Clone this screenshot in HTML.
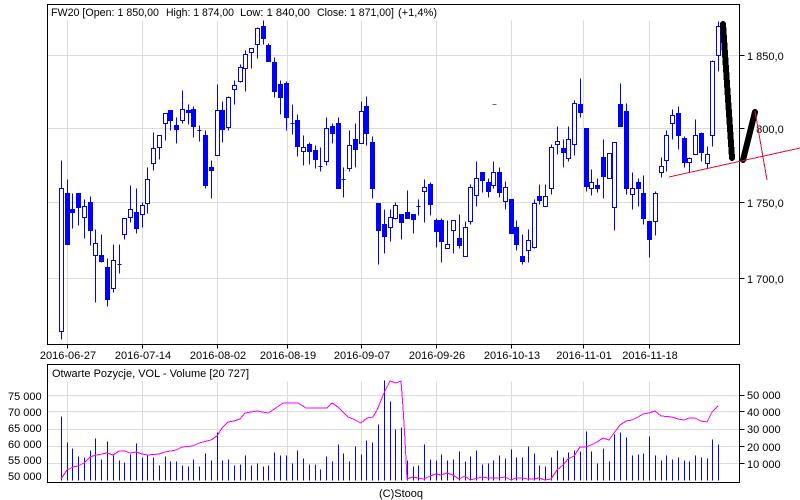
<!DOCTYPE html>
<html><head><meta charset="utf-8"><style>
html,body{margin:0;padding:0;background:#fff;width:800px;height:500px;overflow:hidden}
svg{display:block}
text{font-family:"Liberation Sans",Arial,sans-serif;font-size:11px;fill:#000;white-space:pre}
</style></head><body>
<svg width="800" height="500" viewBox="0 0 800 500" xmlns="http://www.w3.org/2000/svg">
<rect width="800" height="500" fill="#fff"/>
<g transform="translate(.5,.5)" shape-rendering="crispEdges">
<path fill="none" stroke="#dcdcdc" d="M67 20V344M142 20V344M217 20V344M287 20V344M361 20V344M436 20V344M511 20V344M583 20V344M649 20V344M47 55H739M47 128H739M47 202H739M47 278H739M67 381V482M142 381V482M217 381V482M287 381V482M361 381V482M436 381V482M511 381V482M583 381V482M649 381V482M47 395H739M47 411H739M47 429H739M47 446H739M47 463H739"/>
<path fill="none" stroke="#000" d="M47 4H739V344H47ZM47 364H739V482H47ZM739 55H744M739 128H744M739 202H744M739 278H744M739 395H744M739 411H744M739 429H744M739 446H744M739 463H744M67 344V348M142 344V348M217 344V348M287 344V348M361 344V348M436 344V348M511 344V348M583 344V348M649 344V348"/>
<!-- wicks -->
<path fill="none" stroke="#00f" d="M61 160V339M67 179V244M72 193V228M78 193V225M84 199V238M90 196V245M95 229V302M101 234V262M107 258V306M113 244V292M119 244V273M124 218V239M130 185V222M136 188V233M142 202V227M147 167V213M153 132V170M159 135V159M165 113V140M170 110V130M176 117V143M182 90V123M188 104V124M193 106V137M199 125V141M205 130V188M211 160V198M217 84V155M222 101V142M228 96V130M234 80V104M240 64V82M245 50V91M251 48V68M257 27V58M263 20V44M268 43V61M274 57V97M280 80V114M286 81V130M292 104V134M297 114V156M303 135V165M309 142V164M315 145V168M320 147V171M326 117V165M332 123V143M338 117V188M343 167V197M349 130V171M355 123V167M361 101V143M366 96V145M372 136V198M378 203V264M384 209V253M390 209V241M395 202V219M401 214V239M407 190V218M413 214V233M418 199V215M424 179V222M430 182V215M436 218V247M441 218V262M447 220V248M453 220V253M459 214V248M465 221V256M470 184V224M476 161V206M482 172V192M488 178V197M493 161V188M499 167V197M505 181V209M511 199V233M516 220V250M522 234V264M528 229V262M534 199V248M539 184V204M545 184V206M551 144V194M557 126V154M563 139V167M568 126V161M574 100V155M580 78V117M586 128V191M591 169V195M597 178V192M603 139V198M609 153V178M614 142V230M620 83V126M626 103V194M632 172V209M638 178V206M643 175V224M649 221V257M655 191V235M661 157V177M666 130V171M672 109V139M678 106V149M684 136V167M689 157V172M695 119V154M701 132V161M707 146V168M712 60V146M718 21V71"/>
<!-- filled -->
<path fill="#00f" stroke="#00f" d="M65 193h4v51h-4zM70 209h4v3h-4zM76 193h4v14h-4zM88 202h4v28h-4zM99 255h4v6h-4zM105 267h4v32h-4zM117 264h4v0h-4zM134 212h4v16h-4zM168 110h4v10h-4zM174 125h4v4h-4zM186 110h4v2h-4zM191 109h4v17h-4zM197 130h4v0h-4zM203 135h4v50h-4zM209 167h4v3h-4zM220 110h4v19h-4zM261 26h4v12h-4zM266 45h4v16h-4zM272 62h4v29h-4zM278 84h4v13h-4zM284 83h4v34h-4zM290 123h4v0h-4zM295 120h4v26h-4zM307 144h4v7h-4zM313 150h4v9h-4zM318 166h4v0h-4zM330 126h4v7h-4zM336 123h4v65h-4zM341 179h4v0h-4zM353 139h4v10h-4zM364 106h4v27h-4zM370 142h4v46h-4zM376 203h4v27h-4zM382 224h4v12h-4zM399 214h4v8h-4zM405 212h4v6h-4zM411 214h4v5h-4zM416 206h4v0h-4zM428 184h4v20h-4zM434 220h4v11h-4zM439 220h4v21h-4zM457 238h4v7h-4zM480 172h4v8h-4zM486 182h4v9h-4zM497 172h4v20h-4zM509 199h4v34h-4zM514 227h4v17h-4zM520 256h4v5h-4zM537 196h4v4h-4zM561 148h4v4h-4zM578 104h4v8h-4zM584 128h4v58h-4zM595 185h4v3h-4zM601 157h4v19h-4zM618 104h4v22h-4zM624 111h4v77h-4zM636 182h4v6h-4zM641 193h4v25h-4zM647 221h4v18h-4zM676 113h4v22h-4zM682 138h4v24h-4zM699 133h4v19h-4z"/>
<!-- hollow -->
<path fill="#fff" stroke="#00f" d="M59 188h4v143h-4zM82 206h4v11h-4zM93 243h4v12h-4zM111 260h4v28h-4zM122 218h4v16h-4zM128 209h4v8h-4zM140 205h4v9h-4zM145 179h4v24h-4zM151 148h4v15h-4zM157 135h4v12h-4zM163 113h4v10h-4zM180 109h4v11h-4zM215 110h4v45h-4zM226 97h4v30h-4zM232 85h4v4h-4zM238 67h4v14h-4zM243 54h4v14h-4zM249 48h4v4h-4zM255 28h4v16h-4zM301 147h4v4h-4zM324 128h4v33h-4zM347 145h4v23h-4zM359 111h4v32h-4zM388 217h4v10h-4zM393 205h4v13h-4zM422 187h4v4h-4zM445 244h4v4h-4zM451 220h4v10h-4zM463 227h4v29h-4zM468 187h4v34h-4zM474 178h4v17h-4zM491 172h4v13h-4zM503 187h4v14h-4zM526 240h4v10h-4zM532 203h4v44h-4zM543 196h4v10h-4zM549 147h4v41h-4zM555 141h4v3h-4zM566 139h4v19h-4zM572 103h4v41h-4zM589 182h4v6h-4zM607 153h4v25h-4zM612 142h4v65h-4zM630 188h4v6h-4zM653 193h4v28h-4zM659 166h4v6h-4zM664 135h4v25h-4zM670 115h4v8h-4zM687 158h4v4h-4zM693 135h4v19h-4zM705 154h4v9h-4zM710 61h4v74h-4zM716 26h4v29h-4z"/>
<path fill="none" stroke="#666" d="M492 104H496"/>
<!-- volume bars -->
<path fill="none" stroke="#00f" d="M61 416V480M67 442V480M72 448V480M78 456V480M84 457V480M90 450V480M95 438V480M101 459V480M107 441V480M113 455V480M119 460V480M124 462V480M130 454V480M136 443V480M142 457V480M147 454V480M153 457V480M159 465V480M165 456V480M170 461V480M176 461V480M182 465V480M188 466V480M193 459V480M199 466V480M205 453V480M211 460V480M217 432V480M222 460V480M228 459V480M234 465V480M240 464V480M245 455V480M251 465V480M257 463V480M263 466V480M268 465V480M274 452V480M280 455V480M286 455V480M292 463V480M297 450V480M303 458V480M309 464V480M315 464V480M320 469V480M326 456V480M332 461V480M338 444V480M343 453V480M349 461V480M355 446V480M361 454V480M366 440V480M372 442V480M378 424V480M384 380V480M390 401V480M395 429V480M401 427V480M407 460V480M413 466V480M418 465V480M424 444V480M430 459V480M436 460V480M441 454V480M447 460V480M453 459V480M459 451V480M465 461V480M470 456V480M476 450V480M482 464V480M488 463V480M493 460V480M499 455V480M505 458V480M511 449V480M516 457V480M522 457V480M528 446V480M534 453V480M539 465V480M545 466V480M551 457V480M557 450V480M563 457V480M568 452V480M574 450V480M580 451V480M586 431V480M591 451V480M597 463V480M603 448V480M609 461V480M614 434V480M620 432V480M626 437V480M632 455V480M638 454V480M643 453V480M649 436V480M655 455V480M661 460V480M666 455V480M672 459V480M678 457V480M684 460V480M689 461V480M695 455V480M701 457V480M707 458V480M712 439V480M718 444V480"/>
</g>
<!-- open interest line -->
<path fill="none" stroke="#f0f" stroke-width="1" shape-rendering="crispEdges" d="M61 479L67 470L73 467L78 466L84 463L90 457L96 455L102 454L107 453L113 455L119 451L125 451L130 453L136 452L142 454L148 455L159 454L165 452L176 450L182 447L193 446L199 443L211 440L217 436L222 428L228 422L234 421L240 419L245 413L257 411L268 413L270 412L283 403L295 403L298 403L306 408L327 408L332 403L338 407L348 417L353 419L361 423L367 418L373 417L377 410L384 393L390 381L396 383L401 381L403 407L405 440L407 479L413 477L418 478L424 479L430 476L436 474L441 475L447 473L453 475L459 479L465 476L470 480L482 477L488 478L499 478L505 477L511 480L516 478L522 478L528 479L534 479L539 478L545 480L551 479L557 470L563 465L568 459L574 456L580 447L586 447L591 445L597 442L603 438L609 440L614 433L620 425L626 421L632 420L638 417L643 414L649 413L655 411L661 416L672 417L678 419L684 420L689 418L695 418L701 421L707 422L712 412L718 406"/>
<!-- text -->
<text x="51" y="16" textLength="108" lengthAdjust="spacingAndGlyphs">FW20 [Open: 1 850,00</text><text x="166" y="16" textLength="68" lengthAdjust="spacingAndGlyphs">High: 1 874,00</text><text x="240" y="16" textLength="70" lengthAdjust="spacingAndGlyphs">Low: 1 840,00</text><text x="317" y="16" textLength="77" lengthAdjust="spacingAndGlyphs">Close: 1 871,00]</text><text x="398" y="16" textLength="39" lengthAdjust="spacingAndGlyphs">(+1,4%)</text>
<text x="52" y="377">Otwarte Pozycje, VOL - Volume [20 727]</text>
<g>
<text x="747" y="60">1 850,0</text><text x="747" y="133">1 800,0</text><text x="747" y="207">1 750,0</text><text x="747" y="283">1 700,0</text>
<text x="747" y="399">50 000</text><text x="747" y="416">40 000</text><text x="747" y="433">30 000</text><text x="747" y="451">20 000</text><text x="747" y="468">10 000</text>
<text x="8" y="400">75 000</text><text x="8" y="416">70 000</text><text x="8" y="432">65 000</text><text x="8" y="448">60 000</text><text x="8" y="464">55 000</text><text x="8" y="480">50 000</text>
</g>
<g text-anchor="middle">
<text x="68" y="359">2016-06-27</text><text x="143" y="359">2016-07-14</text><text x="218" y="359">2016-08-02</text><text x="288" y="359">2016-08-19</text><text x="362" y="359">2016-09-07</text><text x="437" y="359">2016-09-26</text><text x="512" y="359">2016-10-13</text><text x="584" y="359">2016-11-01</text><text x="650" y="359">2016-11-18</text>
<text x="401" y="497">(C)Stooq</text>
</g>
<!-- overlays -->
<path fill="none" stroke="#000" stroke-width="6" stroke-linecap="round" stroke-linejoin="round" shape-rendering="crispEdges" d="M723 24L732 158M743 160L755 112"/>
<path fill="none" stroke="#f01030" stroke-width="1" shape-rendering="crispEdges" d="M669 177L800 148M755 111L767 180"/>
</svg>
</body></html>
